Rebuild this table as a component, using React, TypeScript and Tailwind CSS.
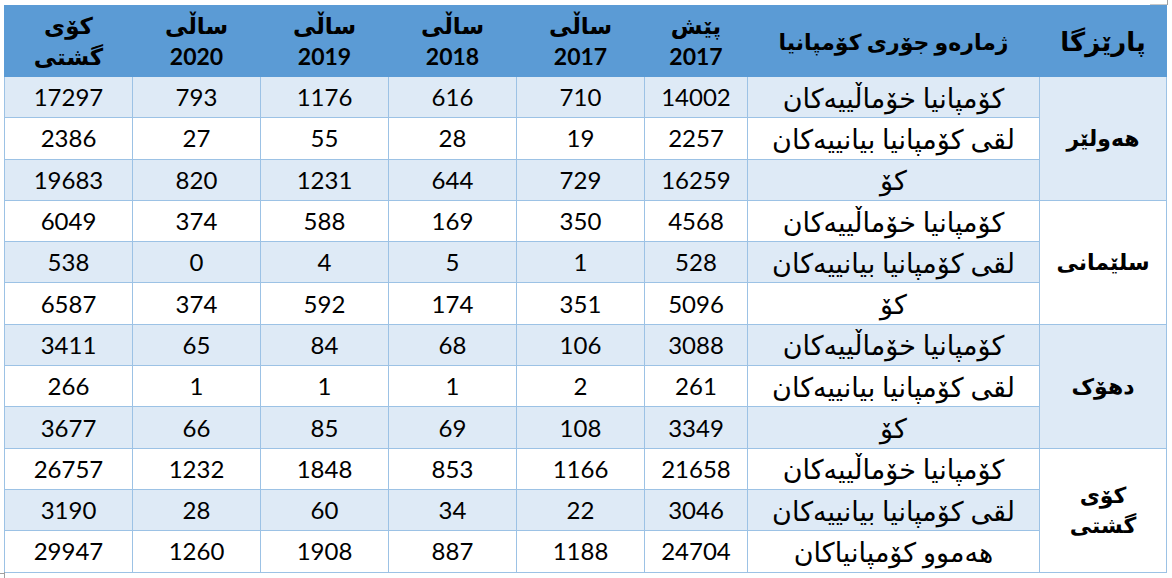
import React from "react";

type Row = {
    type: string;
    values: number[];
};

type Group = {
    region: string[];
    rows: Row[];
};

const groups: Group[] = [
    {
        region: ["هەولێر"],
        rows: [
            { type: "کۆمپانیا خۆماڵییەکان", values: [14002, 710, 616, 1176, 793, 17297] },
            { type: "لقی کۆمپانیا بیانییەکان", values: [2257, 19, 28, 55, 27, 2386] },
            { type: "کۆ", values: [16259, 729, 644, 1231, 820, 19683] },
        ],
    },
    {
        region: ["سلێمانی"],
        rows: [
            { type: "کۆمپانیا خۆماڵییەکان", values: [4568, 350, 169, 588, 374, 6049] },
            { type: "لقی کۆمپانیا بیانییەکان", values: [528, 1, 5, 4, 0, 538] },
            { type: "کۆ", values: [5096, 351, 174, 592, 374, 6587] },
        ],
    },
    {
        region: ["دهۆک"],
        rows: [
            { type: "کۆمپانیا خۆماڵییەکان", values: [3088, 106, 68, 84, 65, 3411] },
            { type: "لقی کۆمپانیا بیانییەکان", values: [261, 2, 1, 1, 1, 266] },
            { type: "کۆ", values: [3349, 108, 69, 85, 66, 3677] },
        ],
    },
    {
        region: ["کۆی", "گشتی"],
        rows: [
            { type: "کۆمپانیا خۆماڵییەکان", values: [21658, 1166, 853, 1848, 1232, 26757] },
            { type: "لقی کۆمپانیا بیانییەکان", values: [3046, 22, 34, 60, 28, 3190] },
            { type: "هەموو کۆمپانیاکان", values: [24704, 1188, 887, 1908, 1260, 29947] },
        ],
    },
];

const headers: string[][] = [
    ["پێش", "2017"],
    ["ساڵی", "2017"],
    ["ساڵی", "2018"],
    ["ساڵی", "2019"],
    ["ساڵی", "2020"],
    ["کۆی", "گشتی"],
];

export default function App() {
    let rowIndex = 0;

    return (
        <div className="relative w-[1172px] h-[578px] bg-white pt-[5px] pl-[4px] font-['Lato','DejaVu_Sans',sans-serif] text-black">
            {/* word table corner marks */}
            <div className="absolute top-[4px] left-[1150px] w-[18px] h-px bg-[#c8c8c8]" />
            <div className="absolute top-0 left-[1167px] w-px h-[5px] bg-[#a0a0a0]" />
            <div className="absolute top-[573px] left-0 w-[5px] h-px bg-[#a0a0a0]" />
            <div className="absolute top-[572px] left-[4px] w-px h-[6px] bg-[#a0a0a0]" />

            <table dir="rtl" className="w-[1162px] table-fixed border-collapse">
                <colgroup>
                    <col className="w-[127px]" />
                    <col className="w-[292px]" />
                    <col className="w-[103px]" />
                    <col className="w-[128px]" />
                    <col className="w-[128px]" />
                    <col className="w-[128px]" />
                    <col className="w-[128px]" />
                    <col className="w-[128px]" />
                </colgroup>
                <thead>
                    <tr className="h-[71px] bg-[#5b9bd5]">
                        <th className="border border-[#5b9bd5] text-[26px] font-bold">پارێزگا</th>
                        <th className="border border-[#5b9bd5] text-[22px] font-bold">ژمارەو جۆری کۆمپانیا</th>
                        {headers.map((h, i) => (
                            <th key={i} className="border border-[#5b9bd5] text-[23px] font-bold leading-[31px]">
                                <div>{h[0]}</div>
                                <div>{h[1]}</div>
                            </th>
                        ))}
                    </tr>
                </thead>
                <tbody>
                    {groups.map((g) =>
                        g.rows.map((r, i) => {
                            const striped = rowIndex % 2 === 0;
                            rowIndex++;
                            return (
                                <tr key={g.region.join() + i} className={striped ? "bg-[#deeaf6]" : "bg-white"}>
                                    {i === 0 && (
                                        <td
                                            rowSpan={3}
                                            className="border border-[#9cc2e5] text-center text-[22px] font-bold leading-[30px]"
                                        >
                                            {g.region.map((t) => (
                                                <div key={t}>{t}</div>
                                            ))}
                                        </td>
                                    )}
                                    <td className="h-[41.3px] border border-[#9cc2e5] text-center text-[27px] leading-none p-0">
                                        {r.type}
                                    </td>
                                    {r.values.map((v, j) => (
                                        <td key={j} className="border border-[#9cc2e5] text-center text-[24px] p-0">
                                            {v}
                                        </td>
                                    ))}
                                </tr>
                            );
                        })
                    )}
                </tbody>
            </table>
        </div>
    );
}
